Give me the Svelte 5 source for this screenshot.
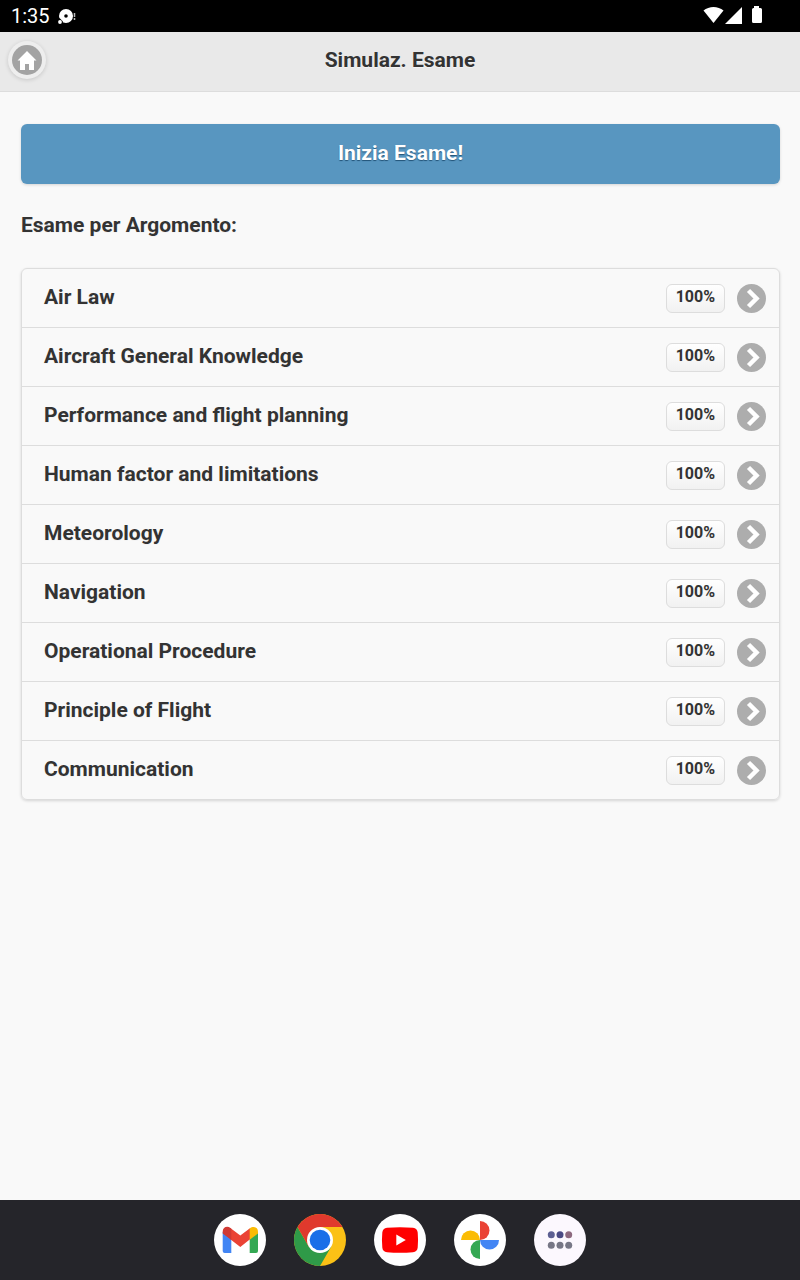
<script lang="ts">
	interface Topic {
		name: string;
		score: number;
	}

	const topics: Topic[] = [
		{ name: 'Air Law', score: 100 },
		{ name: 'Aircraft General Knowledge', score: 100 },
		{ name: 'Performance and flight planning', score: 100 },
		{ name: 'Human factor and limitations', score: 100 },
		{ name: 'Meteorology', score: 100 },
		{ name: 'Navigation', score: 100 },
		{ name: 'Operational Procedure', score: 100 },
		{ name: 'Principle of Flight', score: 100 },
		{ name: 'Communication', score: 100 }
	];
</script>

<div class="screen">
	<div class="status-bar">
		<span class="clock">1:35</span>
		<svg class="notice" width="20" height="18" viewBox="0 0 20 18" aria-hidden="true">
			<path fill="#fff" fill-rule="evenodd" d="M9 2a7 7 0 1 1 0 14a7 7 0 0 1 0-14zM9 7.200a1.800 1.800 0 1 0 0 3.600a1.800 1.800 0 0 0 0-3.600z" />
			<path d="M2 11.500L5.500 15" stroke="#000" stroke-width="1.500" />
			<circle cx="3" cy="15" r="1.900" fill="#fff" />
			<path d="M17.500 6v4M17.500 11v2" stroke="#bbb" stroke-width="1.500" />
		</svg>
		<svg class="signals" width="60" height="20" viewBox="0 0 60 20" fill="#fff" aria-hidden="true">
			<path d="M0.500 5.500C6 .8 15 .8 20.500 5.500L10.500 18z" />
			<path d="M39 2v17H22z" />
			<path d="M51 1h5v2h1.500q1.500 0 1.500 1.500v12q0 1.500-1.500 1.500h-7q-1.500 0-1.500-1.500v-12q0-1.500 1.500-1.500h.5z" />
		</svg>
	</div>

	<header class="header">
		<a class="home" href="#home" aria-label="Home">
			<svg width="30" height="30" viewBox="0 0 30 30" aria-hidden="true">
				<circle cx="15" cy="15" r="15" fill="#a3a3a3" />
				<path fill="#fff" d="M15 6L5.500 15.500H8V25h5v-6h4v6h5v-9.500h2.500z" />
			</svg>
		</a>
		<h1>Simulaz. Esame</h1>
	</header>

	<main class="content">
		<button class="start" type="button">Inizia Esame!</button>
		<h2>Esame per Argomento:</h2>
		<ul class="topics">
			{#each topics as topic}
				<li>
					<a class="topic" href="#esame">
						<span class="name">{topic.name}</span>
						<span class="score">{topic.score}%</span>
						<svg width="29" height="29" viewBox="0 0 29 29" aria-hidden="true">
							<circle cx="14.500" cy="14.500" r="14.500" fill="#adadad" />
							<path d="M11.500 6.500l8 8l-8 8" fill="none" stroke="#fff" stroke-width="4.500" />
						</svg>
					</a>
				</li>
			{/each}
		</ul>
	</main>

	<nav class="dock" aria-label="App">
		<button type="button" aria-label="Gmail">
			<svg viewBox="0 0 52 52">
				<circle cx="26" cy="26" r="26" fill="#fff" />
				<path fill="#4285f4" d="M8.700 18l8.600 6V39H10.700q-2 0-2-2z" />
				<path fill="#34a853" d="M44 18l-8.300 6V39H42q2 0 2-2z" />
				<path fill="#ea4335" d="M16 13.700L26.300 21.500L36.300 14v11L26.300 33L16 25z" />
				<path fill="#d03a34" d="M8.700 17.500c0-4.500 4.800-6 8-3.300L17.300 14.700V26L8.700 19.500z" />
				<path fill="#fbbc04" d="M35.700 14.500c3.800-3 8.300-1 8.300 3v2L35.700 25.800z" />
			</svg>
		</button>
		<button type="button" aria-label="Chrome">
			<svg viewBox="0 0 52 52">
				<circle cx="26" cy="26" r="26" fill="#fbc116" />
				<path fill="#2f9a48" d="M3.500 13A26 26 0 0 0 26 52L37.300 32.500H14.700z" />
				<path fill="#e0392d" d="M3.500 13A26 26 0 0 1 48.500 13H26V26L14.700 32.500z" />
				<circle cx="26" cy="26" r="13" fill="#fff" />
				<circle cx="26" cy="26" r="10.300" fill="#1a6fe8" />
			</svg>
		</button>
		<button type="button" aria-label="YouTube">
			<svg viewBox="0 0 52 52">
				<circle cx="26" cy="26" r="26" fill="#fff" />
				<path fill="#f00" d="M13 13.700Q26 12.700 39 13.700Q43.300 14.200 43.700 18.500Q44.400 26 43.700 33.500Q43.300 37.800 39 38.300Q26 39.300 13 38.300Q8.700 37.800 8.300 33.500Q7.600 26 8.300 18.500Q8.700 14.200 13 13.700z" />
				<path fill="#fff" d="M22.300 20.500v11l9.500-5.500z" />
			</svg>
		</button>
		<button type="button" aria-label="Google Foto">
			<svg viewBox="0 0 52 52">
				<circle cx="26" cy="26" r="26" fill="#fff" />
				<path fill="#ea4335" d="M26 7a9.500 9.500 0 0 1 0 19z" />
				<path fill="#4285f4" d="M45 26a9.500 9.500 0 0 1-19 0z" />
				<path fill="#34a853" d="M26 45a9.500 9.500 0 0 1 0-19z" />
				<path fill="#fbbc04" d="M7 26a9.500 9.500 0 0 1 19 0z" />
			</svg>
		</button>
		<button type="button" aria-label="Tutte le app">
			<svg viewBox="0 0 52 52">
				<circle cx="26" cy="26" r="26" fill="#fcf8fe" />
				<circle cx="17.300" cy="20.800" r="3.500" fill="#5c5f92" />
				<circle cx="26" cy="20.800" r="3.500" fill="#4a4a84" />
				<circle cx="34.700" cy="20.800" r="3.500" fill="#8d697f" />
				<circle cx="17.300" cy="31.300" r="3.500" fill="#777786" />
				<circle cx="26" cy="31.300" r="3.500" fill="#777786" />
				<circle cx="34.700" cy="31.300" r="3.500" fill="#777786" />
			</svg>
		</button>
	</nav>
</div>

<style>
	:global(body) {
		margin: 0;
		background: #f9f9f9;
	}

	.screen {
		display: flex;
		flex-direction: column;
		min-height: 100vh;
		font-family: Roboto, sans-serif;
		font-size: 21px;
		color: #333;
		background: #f9f9f9;
	}

	/* Status bar */
	.status-bar {
		display: flex;
		align-items: center;
		height: 32px;
		padding: 0 37px 0 11px;
		box-sizing: border-box;
		color: #fff;
		background: #000;
	}

	.clock {
		font-size: 20px;
		line-height: 32px;
	}

	.notice {
		margin-left: 7px;
	}

	.signals {
		margin-left: auto;
		margin-bottom: 2px;
	}

	/* Header */
	.header {
		display: grid;
		grid-template-columns: 40px 1fr 40px;
		align-items: center;
		height: 60px;
		padding: 0 7px 3px;
		box-sizing: border-box;
		border-bottom: 1px solid #ddd;
		background: #e9e9e9;
	}

	.home {
		display: flex;
		justify-content: center;
		align-items: center;
		width: 38px;
		height: 38px;
		justify-self: center;
		border-radius: 50%;
		background: #eee;
		box-shadow: 0 1px 4px rgba(0, 0, 0, 0.15);
	}

	h1,
	h2 {
		margin: 0;
		font-size: 21px;
		line-height: 28px;
		font-weight: 700;
		text-shadow: 0 1px 0 #f3f3f3;
	}

	h1 {
		text-align: center;
	}

	/* Page content */
	.content {
		flex: 1;
		padding: 32px 20px 32px 21px;
	}

	.start {
		display: block;
		width: 100%;
		height: 60px;
		margin-bottom: 27px;
		padding: 0 0 3px;
		border: 0;
		border-radius: 6px;
		font: inherit;
		font-weight: 700;
		color: #fff;
		text-shadow: 0 1px 1px #225377;
		background: #5896c0;
		box-shadow: 0 1px 3px rgba(0, 0, 0, 0.15);
		cursor: pointer;
	}

	.topics {
		margin: 29px 0 0;
		padding: 0;
		list-style: none;
		border: 1px solid #ddd;
		border-radius: 6px;
		box-shadow: 0 1px 3px rgba(0, 0, 0, 0.15);
	}

	.topics li + li {
		border-top: 1px solid #ddd;
	}

	.topic {
		display: flex;
		align-items: center;
		height: 58px;
		padding: 0 13px 0 22px;
		color: #333;
		font-weight: 700;
		text-decoration: none;
		text-shadow: 0 1px 0 #f3f3f3;
	}

	.name {
		flex: 1;
		padding-bottom: 2px;
	}

	.score {
		margin-right: 12px;
		padding: 0 9px 3px;
		border: 1px solid #ddd;
		border-radius: 6px;
		font-size: 16px;
		line-height: 24px;
		background: linear-gradient(#fff, #f1f1f1);
	}

	/* App dock */
	.dock {
		display: flex;
		justify-content: center;
		align-items: center;
		gap: 28px;
		height: 80px;
		background: #25252a;
	}

	.dock button {
		width: 52px;
		height: 52px;
		padding: 0;
		border: 0;
		border-radius: 50%;
		background: none;
		cursor: pointer;
	}

	.dock svg {
		display: block;
		width: 52px;
		height: 52px;
	}
</style>
